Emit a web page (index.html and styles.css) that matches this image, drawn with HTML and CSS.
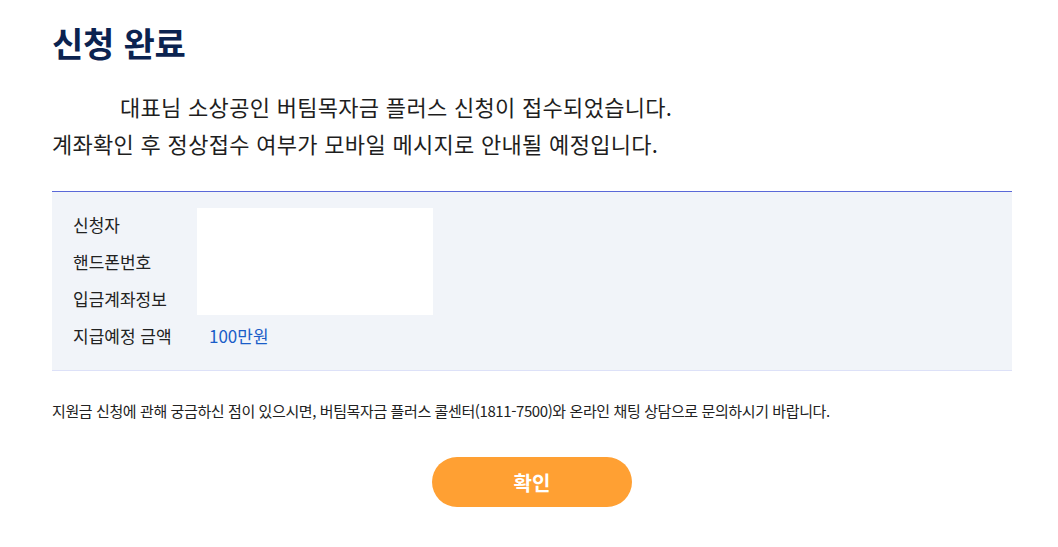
FILE: index.html
```html
<!DOCTYPE html>
<html lang="ko">
<head>
<meta charset="utf-8">
<title>신청 완료</title>
<link rel="stylesheet" href="styles.css">
</head>
<body>
<main class="page">
  <h1 class="title">신청 완료</h1>
  <p class="lead">대표님 소상공인 버팀목자금 플러스 신청이 접수되었습니다.<br>계좌확인 후 정상접수 여부가 모바일 메시지로 안내될 예정입니다.</p>
  <section class="info">
    <div class="grid">
      <div class="label r1">신청자</div>
      <div class="label r2">핸드폰번호</div>
      <div class="label r3">입금계좌정보</div>
      <div class="blank"></div>
      <div class="label r4">지급예정 금액</div>
      <div class="value r4">100만원</div>
    </div>
  </section>
  <p class="note">지원금 신청에 관해 궁금하신 점이 있으시면, 버팀목자금 플러스 콜센터(1811-7500)와 온라인 채팅 상담으로 문의하시기 바랍니다.</p>
  <div class="actions"><button class="confirm" type="button">확인</button></div>
</main>
</body>
</html>
```
FILE: styles.css
```css
* { box-sizing: border-box; }
html, body { margin: 0; padding: 0; background: #fff; }
body { font-family: "Noto Sans CJK KR", "Noto Sans", sans-serif; color: #222; }
.page { width: 960px; margin-left: 52px; padding-top: 20px; }
.title { margin: 0; font-size: 34px; font-weight: 700; line-height: 46px; color: #0b2350; letter-spacing: -0.2px; }
.lead { margin: 22px 0 0; font-size: 22px; line-height: 37px; color: #1e1e1e; text-indent: 68px; letter-spacing: 0.3px; }
.info { margin-top: 29px; background: #f1f4f9; border-top: 1px solid #5a68d8; border-bottom: 1px solid #dde1f8; padding: 14px 21px 16px; }
.grid { display: grid; grid-template-columns: 124px 236px; grid-template-rows: repeat(4, 37px); }
.label { grid-column: 1; font-size: 17px; line-height: 37px; color: #222; }
.r1 { grid-row: 1; } .r2 { grid-row: 2; } .r3 { grid-row: 3; } .r4 { grid-row: 4; }
.blank { grid-column: 2; grid-row: 1 / 4; background: #fff; margin: 2px 0 2px; }
.value { grid-column: 2; font-size: 17px; line-height: 37px; color: #1a5dc8; padding-left: 12px; }
.note { margin: 26px 0 0; font-size: 15px; line-height: 28px; color: #222; letter-spacing: -0.4px; }
.actions { display: flex; justify-content: center; margin-top: 32px; }
.confirm { width: 200px; height: 50px; border: none; border-radius: 25px; background: #ffa033; color: #fff; font-family: inherit; font-size: 20px; font-weight: 700; cursor: pointer; }
```
